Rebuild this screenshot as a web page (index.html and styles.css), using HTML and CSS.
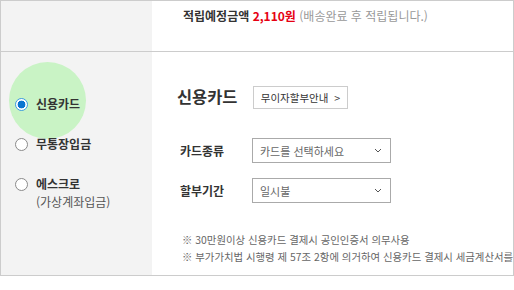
FILE: index.html
```html
<!DOCTYPE html>
<html lang="ko">
<head>
<meta charset="utf-8">
<link rel="stylesheet" href="styles.css">
</head>
<body>
<div class="frame">
  <div class="cell side"></div>
  <div class="cell main top">
    <p class="reward"><b>적립예정금액</b> <b class="amount">2,110원</b> <span class="muted">(배송완료 후 적립됩니다.)</span></p>
  </div>
  <div class="divider"></div>
  <div class="cell side methods">
    <span class="ripple"></span>
    <label class="method"><span class="radio checked"></span><span class="mlabel">신용카드</span></label>
    <label class="method"><span class="radio"></span><span class="mlabel">무통장입금</span></label>
    <label class="method"><span class="radio"></span><span class="mlabel">에스크로<br><span class="sub">(가상계좌입금)</span></span></label>
  </div>
  <div class="cell main detail">
    <div class="form">
      <h2 class="title">신용카드</h2>
      <div><button class="btn">무이자할부안내 <span class="gt">&gt;</span></button></div>
      <div class="flabel">카드종류</div>
      <div class="select"><span>카드를 선택하세요</span><svg width="8" height="5" viewBox="0 0 8 5"><path d="M1 1 L4 4 L7 1" fill="none" stroke="#555" stroke-width="1"/></svg></div>
      <div class="flabel">할부기간</div>
      <div class="select"><span>일시불</span><svg width="8" height="5" viewBox="0 0 8 5"><path d="M1 1 L4 4 L7 1" fill="none" stroke="#555" stroke-width="1"/></svg></div>
    </div>
    <ul class="notes">
      <li>※ 30만원이상 신용카드 결제시 공인인증서 의무사용</li>
      <li>※ 부가가치법 시행령 제 57조 2항에 의거하여 신용카드 결제시 세금계산서를</li>
    </ul>
  </div>
</div>
</body>
</html>
```

FILE: styles.css
```css
* { box-sizing: border-box; }
html, body { margin: 0; padding: 0; background: #fff; }
body {
  font-family: "Noto Sans CJK KR", "Noto Sans", sans-serif;
  color: #333;
  width: 514px;
  height: 290px;
  overflow: hidden;
}
.frame {
  width: 514px;
  height: 276px;
  border: 1px solid #ccc;
  display: grid;
  grid-template-columns: 151px 1fr;
  grid-template-rows: 50px 1px 1fr;
  overflow: hidden;
}
.cell.side { background: #f3f3f3; }
.divider { grid-column: 1 / 3; background: #ccc; }
.top { padding: 6px 0 0 31px; }
.reward { margin: 0; font-size: 12px; line-height: 17px; white-space: nowrap; }
.amount { color: #e60012; }
.muted { color: #999; }

.methods {
  position: relative;
  padding: 43px 0 0 14px;
  display: flex;
  flex-direction: column;
  gap: 22px;
}
.ripple {
  position: absolute;
  left: 8px;
  top: 10px;
  width: 77px;
  height: 77px;
  border-radius: 50%;
  background: #c9f3c5;
}
.method {
  position: relative;
  display: flex;
  align-items: flex-start;
  gap: 8px;
  font-size: 12px;
  line-height: 18px;
}
.radio {
  width: 13px;
  height: 13px;
  margin-top: 3px;
  border-radius: 50%;
  border: 1px solid #8a8a8a;
  background: #fff;
  flex: none;
}
.radio.checked {
  border: 1px solid #3d9be0;
  background: radial-gradient(circle, #0a74d0 0 3.6px, #fff 4.2px);
}
.mlabel { font-weight: bold; color: #333; }
.sub { font-weight: normal; color: #555; }

.detail { padding: 31px 0 0 25px; }
.form {
  display: grid;
  grid-template-columns: 75px auto;
  align-items: center;
}
.title {
  margin: 0;
  font-size: 16.4px;
  line-height: 23px;
  font-weight: bold;
  color: #333;
  white-space: nowrap;
}
.btn {
  margin: 0 0 0 1px;
  height: 23px;
  width: 95px;
  padding: 0;
  border: 1px solid #ccc;
  background: #fff;
  font-family: inherit;
  font-size: 10.5px;
  color: #333;
  cursor: pointer;
}
.gt { margin-left: 3px; }
.flabel {
  font-size: 12px;
  font-weight: bold;
  padding-left: 3px;
  color: #333;
}
.select {
  display: flex;
  align-items: center;
  justify-content: space-between;
  width: 139px;
  height: 25px;
  border: 1px solid #aaa;
  padding: 0 8px 0 7px;
  font-size: 11px;
  color: #666;
}
.form > .flabel:nth-child(3), .form > .select:nth-child(4) { margin-top: 29px; }
.form > .flabel:nth-child(5), .form > .select:nth-child(6) { margin-top: 15px; }
.notes {
  list-style: none;
  margin: 28px 0 0 5px;
  padding: 0;
  font-size: 10.4px;
  line-height: 17px;
  color: #666;
  white-space: nowrap;
}
```
